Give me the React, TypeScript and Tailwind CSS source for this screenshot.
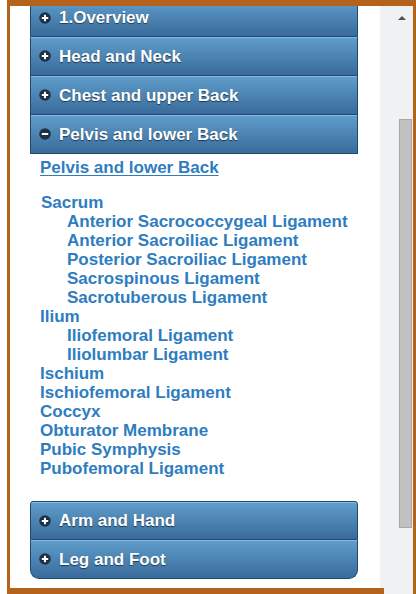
import React from "react";

const font = "font-['Liberation_Sans',Arial,sans-serif]";

function Icon({ open }: { open?: boolean }) {
  return (
    <svg width="12" height="12" viewBox="0 0 12 12" className="shrink-0">
      <circle cx="6" cy="6" r="5.8" fill="#1e3246" />
      <rect x="2.8" y="5" width="6.4" height="2" fill="#fff" />
      {!open && <rect x="5" y="2.8" width="2" height="6.4" fill="#fff" />}
    </svg>
  );
}

function Header({ label, open, className = "" }: { label: string; open?: boolean; className?: string }) {
  return (
    <div
      className={`flex h-[39px] items-center gap-[8px] border-x border-b border-[#1b4a74] bg-gradient-to-b from-[#609ecb] to-[#396b9b] pl-[8px] text-[17px] font-bold text-white shadow-[inset_0_1px_0_rgba(160,205,240,0.6)] [text-shadow:0_1px_1px_rgba(0,0,0,0.55)] ${className}`}
    >
      <Icon open={open} />
      <span className="leading-none">{label}</span>
    </div>
  );
}

const sacrum = [
  "Anterior Sacrococcygeal Ligament",
  "Anterior Sacroiliac Ligament",
  "Posterior Sacroiliac Ligament",
  "Sacrospinous Ligament",
  "Sacrotuberous Ligament",
];
const ilium = ["Iliofemoral Ligament", "Iliolumbar Ligament"];
const rest = ["Ischium", "Ischiofemoral Ligament", "Coccyx", "Obturator Membrane", "Pubic Symphysis", "Pubofemoral Ligament"];

export default function App() {
  return (
    <div className={`flex h-[594px] w-[416px] overflow-hidden bg-white ${font}`}>
      <div className="w-[7px] shrink-0 bg-white" />
      <div className="flex h-[594px] w-[409px] border-x-[3px] border-t-[6px] border-[#b5621d]">
        <div className="flex w-[370px] shrink-0 flex-col">
          <div className="h-[582px] overflow-hidden bg-white">
            <div className="-mt-[8px] ml-[20px] w-[328px]">
              <Header label="1.Overview" className="rounded-t-[8px] border-t" />
              <Header label="Head and Neck" />
              <Header label="Chest and upper Back" />
              <Header
                label="Pelvis and lower Back"
                open
                className="relative z-10 shadow-[inset_0_1px_0_rgba(160,205,240,0.6),1px_2px_4px_rgba(0,0,0,0.35)]"
              />
              <div className="pt-[4px] pb-[23px] pl-[10px] text-[17px] font-bold leading-[19px] text-[#2e7dc0]">
                <div className="underline underline-offset-2">Pelvis and lower Back</div>
                <div className="mt-[16px] pl-[1px]">Sacrum</div>
                {sacrum.map((s) => (
                  <div key={s} className="pl-[27px]">
                    {s}
                  </div>
                ))}
                <div>Ilium</div>
                {ilium.map((s) => (
                  <div key={s} className="pl-[27px]">
                    {s}
                  </div>
                ))}
                {rest.map((s) => (
                  <div key={s}>{s}</div>
                ))}
              </div>
              <Header label="Arm and Hand" className="rounded-t-[3px] border-t" />
              <Header label="Leg and Foot" className="rounded-b-[9px]" />
            </div>
          </div>
          <div className="relative z-10 h-[6px] w-[376px] -ml-[2px] bg-[#b5621d]" />
        </div>
        <div className="flex flex-1 flex-col items-end bg-[#f0f1f2] pr-[1px]">
          <div className="mt-[7px] mr-[3px] flex h-[10px] w-[14px] items-center justify-center">
            <div className="h-0 w-0 border-x-[4px] border-b-[4px] border-x-transparent border-b-[#505050]" />
          </div>
          <div className="mt-[96px] h-[409px] w-[13px] border border-[#a8a8a8] bg-[#c1c1c1]" />
        </div>
      </div>
    </div>
  );
}
